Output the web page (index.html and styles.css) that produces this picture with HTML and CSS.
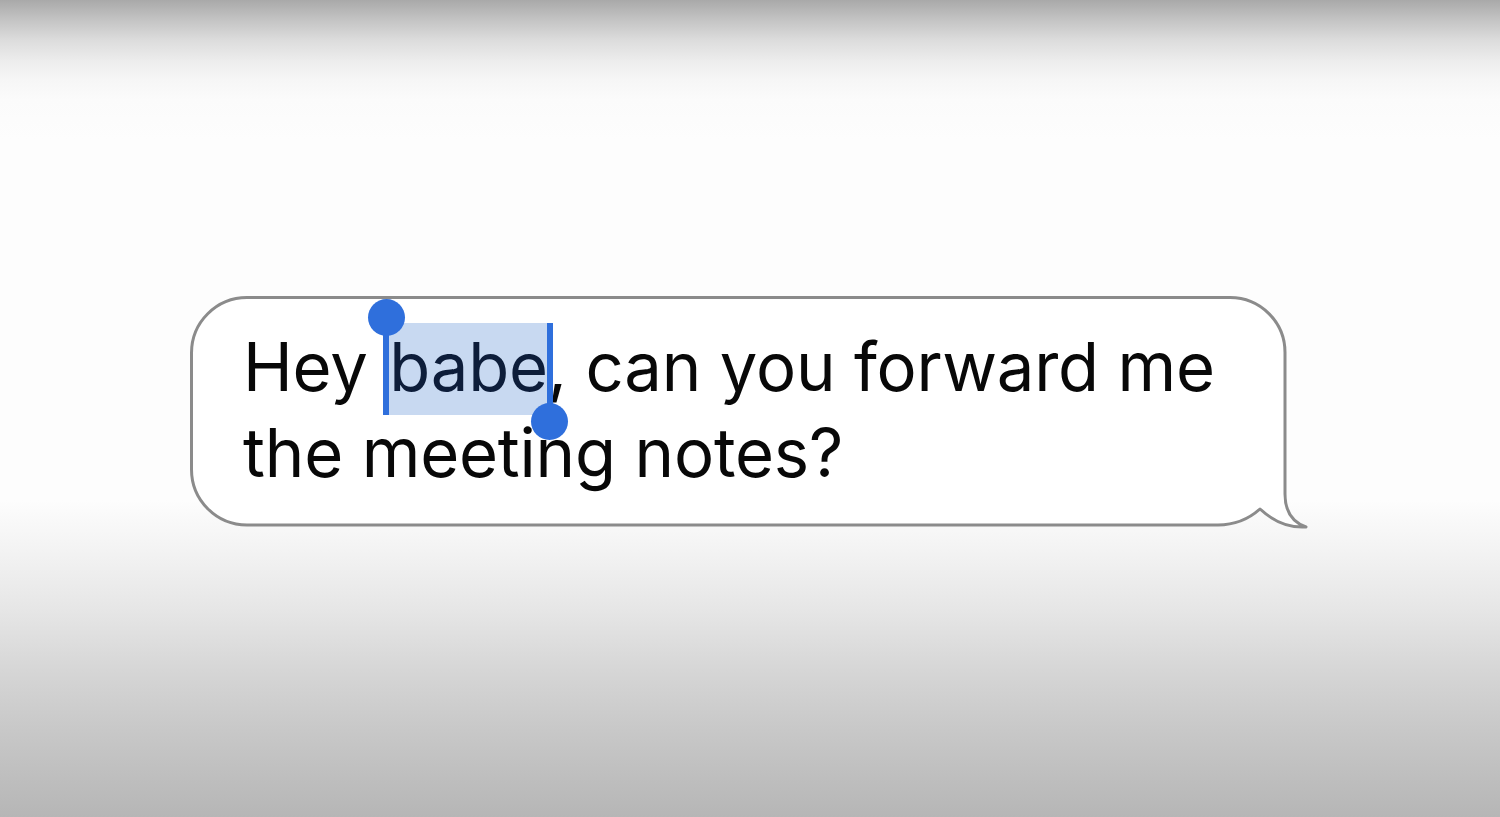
FILE: index.html
```html
<!DOCTYPE html>
<html lang="en">
<head>
<meta charset="utf-8">
<title>Message</title>
<link rel="stylesheet" href="styles.css">
</head>
<body>
<main class="stage">
  <div class="bubble">
    <svg class="bubble-shape" width="1120" height="236" viewBox="0 0 1120 236" aria-hidden="true">
      <path d="M57 1.5 H1040 A55 55 0 0 1 1095 56.5 V198 C1095 214 1102 226 1116 231 C1100 232 1084 226 1070 213 C1060 222 1046 229 1028 229 H57 A55.5 55.5 0 0 1 1.5 173.5 V57 A55.5 55.5 0 0 1 57 1.5 Z"
            fill="#ffffff" stroke="#8b8b8b" stroke-width="3" stroke-linejoin="round"/>
    </svg>
    <p class="message">Hey <span class="selected"><span class="handle handle-start"></span>babe<span class="handle handle-end"></span></span>, can you forward me<br>the meeting notes?</p>
  </div>
</main>
</body>
</html>
```

FILE: styles.css
```css
html, body {
  margin: 0;
  height: 100%;
}

body {
  background: linear-gradient(to bottom,
    #a9a9a9 0px,
    #c4c4c4 20px,
    #dcdcdc 40px,
    #ececec 60px,
    #f6f6f6 80px,
    #fbfbfb 100px,
    #fdfdfd 140px,
    #fdfdfd 500px,
    #f3f3f3 550px,
    #e6e6e6 610px,
    #d6d6d6 670px,
    #c8c8c8 730px,
    #b6b6b6 817px);
  font-family: "Inter", "Liberation Sans", sans-serif;
  overflow: hidden;
}

.stage {
  padding: 296px 0 0 190px;
}

.bubble {
  position: relative;
  width: 1095px;
  height: 230px;
  box-sizing: border-box;
  padding: 28px 0 0 53px;
}

.bubble-shape {
  position: absolute;
  left: 0;
  top: 0;
}

.message {
  position: relative;
  margin: 0;
  font-size: 67px;
  line-height: 86px;
  color: #080808;
  letter-spacing: -0.2px;
}

.selected {
  position: relative;
  margin-left: 3px;
  background: #c8d9f1;
  color: #0d1d3a;
  padding: 3px 0 8px;
}

/* selection handles: a bar with a round grip at one end */
.handle {
  position: absolute;
  width: 6px;
  background: #2f6fdc;
}

.handle::before {
  content: "";
  position: absolute;
  left: 50%;
  width: 37px;
  height: 37px;
  margin-left: -18.5px;
  border-radius: 50%;
  background: #2f6fdc;
}

.handle-start {
  left: -6px;
  top: -6px;
  height: 98px;
}

.handle-start::before {
  top: -18px;
}

.handle-end {
  right: -5px;
  top: 0;
  height: 99px;
}

.handle-end::before {
  bottom: -18px;
}
```
